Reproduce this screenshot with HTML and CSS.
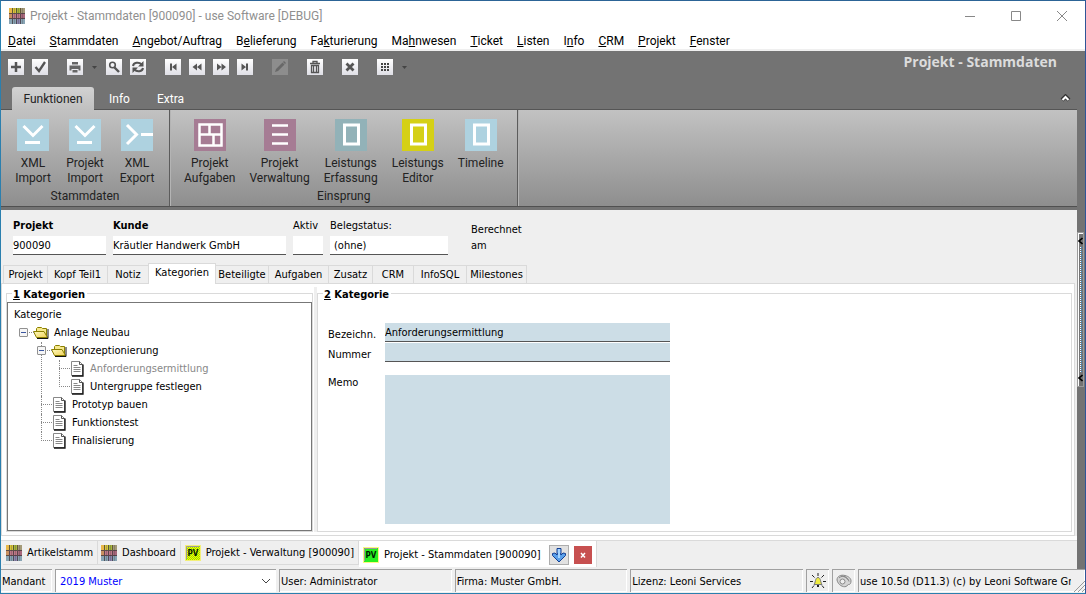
FILE: index.html
```html
<!DOCTYPE html>
<html lang="de">
<head>
<meta charset="utf-8">
<title>Projekt - Stammdaten [900090] - use Software [DEBUG]</title>
<link rel="stylesheet" href="styles.css">
</head>
<body>
<svg class="defs" aria-hidden="true">
  <defs>
    <linearGradient id="fold" x1="0" y1="0" x2="1" y2="1"><stop offset="0" stop-color="#fffbc0"/><stop offset="1" stop-color="#efcf55"/></linearGradient>
    <pattern id="chk" width="2" height="2" patternUnits="userSpaceOnUse"><rect width="2" height="2" fill="#90e800"/><rect width="1" height="1" fill="#fff200"/><rect x="1" y="1" width="1" height="1" fill="#fff200"/></pattern>
    <symbol id="logo" viewBox="0 0 16 16">
      <rect width="16" height="5.500" fill="#d8c63a"/><rect width="3" height="5.500" fill="#e8b848"/><rect x="7" width="4" height="5.500" fill="#a8b83c"/><rect x="12" width="4" height="5.500" fill="#a49a78"/>
      <rect y="5.500" width="16" height="5.500" fill="#c07888"/><rect y="5.500" width="3" height="5.500" fill="#c89060"/><rect x="12" y="5.500" width="4" height="5.500" fill="#a8687c"/>
      <rect y="11" width="16" height="5" fill="#88a4b4"/><rect x="7" y="11" width="5" height="5" fill="#8c88b0"/>
      <path d="M3.500 0v16M7.500 0v16M11.500 0v16M0 5.500h16M0 10.500h16" stroke="#3c3438" opacity=".75"/>
      <path d="M5.500 0v16M9.500 0v16M13.500 0v16" stroke="#3c3438" opacity=".25"/>
    </symbol>
    <symbol id="folder" viewBox="0 0 16 16">
      <path d="M3.500 6V3.500l1-1h4l1 1h4V12.500h-2" fill="#f6e88c" stroke="#8c8000"/>
      <path d="M.5 6.500H11l3.500 6H3.500z" fill="url(#fold)" stroke="#8c8000"/>
      <path d="M15 4v9.500H4" fill="none" stroke="#111"/>
    </symbol>
    <symbol id="doc" viewBox="0 0 16 16">
      <path d="M2.500 .5h8l3 3v11h-11z" fill="#fff" stroke="#888"/>
      <path d="M14 3.500V15H3" fill="none" stroke="#111" stroke-width="1.300"/>
      <path d="M10.500 .5v3h3.500" fill="none" stroke="#555"/>
      <path d="M4.500 4.500h4M4.500 6.500h7M4.500 8.500h7M4.500 10.500h7" stroke="#888"/>
    </symbol>
    <symbol id="pv" viewBox="0 0 16 16">
      <rect x="1" y="1" width="14" height="14" fill="var(--pv)"/>
      <rect x=".5" y=".5" width="15" height="15" fill="none" stroke="#f6ee00" stroke-dasharray="1 1"/>
      <path d="M1.500 14V1.500H14" fill="none" stroke="#999"/>
      <text x="8" y="11" text-anchor="middle" font-size="8" font-weight="bold" fill="#001800">PV</text>
    </symbol>
    <symbol id="down" viewBox="0 0 32 32">
      <path d="M6.500 7L16 16.500L25.500 7M8 23.500H23" fill="none" stroke="#fff" stroke-width="3"/>
    </symbol>
    <symbol id="frame" viewBox="0 0 32 32"><rect x="9.500" y="6" width="14" height="19" fill="none" stroke="#fff" stroke-width="3"/></symbol>
  </defs>
</svg>
<div class="window">
  <header class="titlebar">
    <svg class="i16"><use href="#logo"/></svg>
    <span class="caption">Projekt - Stammdaten [900090] - use Software [DEBUG]</span>
    <button class="winbtn" aria-label="Minimieren"><svg width="12" height="12"><path d="M1 6.500h10" stroke="#888"/></svg></button>
    <button class="winbtn" aria-label="Maximieren"><svg width="12" height="12"><path d="M1.500 1.500h9v9h-9z" fill="none" stroke="#888"/></svg></button>
    <button class="winbtn" aria-label="Schließen"><svg width="12" height="12"><path d="M1 1l10 10M11 1L1 11" stroke="#888"/></svg></button>
  </header>
  <nav class="menubar">
    <button><u>D</u>atei</button><button><u>S</u>tammdaten</button><button><u>A</u>ngebot/Auftrag</button><button>B<u>e</u>lieferung</button><button>Fa<u>k</u>turierung</button><button>Ma<u>h</u>nwesen</button><button><u>T</u>icket</button><button><u>L</u>isten</button><button>I<u>n</u>fo</button><button><u>C</u>RM</button><button><u>P</u>rojekt</button><button><u>F</u>enster</button>
  </nav>
  <div class="body">
    <div class="main">
      <section class="top">
        <div class="toolbar">
          <div class="tools">
            <div class="tgroup">
              <button class="tool" aria-label="Neu"><svg class="i16"><path d="M8 3v10M3 8h10" stroke="#555" stroke-width="2.500"/></svg></button>
              <button class="tool" aria-label="Speichern"><svg class="i16"><path d="M3.500 8l3.500 4 6-9" fill="none" stroke="#555" stroke-width="2.300"/></svg></button>
            </div>
            <div class="tgroup">
              <button class="tool" aria-label="Drucken"><svg class="i16"><path d="M5 3h6v2.500H5zM2.500 6.500h11v5h-2v-1.500h-7v1.500h-2zM5.500 11h5v2.500h-5z" fill="#666"/></svg></button>
              <button class="drop" aria-label="Druckoptionen"><svg width="7" height="5"><path d="M1 1h5L3.500 4z" fill="#444"/></svg></button>
              <button class="tool" aria-label="Suchen"><svg class="i16"><circle cx="6.500" cy="6" r="2.800" fill="none" stroke="#555" stroke-width="1.600"/><path d="M8.500 8.500l4.500 4.500" stroke="#555" stroke-width="2.400"/></svg></button>
              <button class="tool" aria-label="Aktualisieren"><svg class="i16"><path d="M3 7c.5-3.500 6-4.500 8.500-1.500M13 9c-.5 3.500-6 4.500-8.500 1.500" fill="none" stroke="#555" stroke-width="2"/><path d="M13.500 2v5.500H8zM2.500 14V8.500H8z" fill="#555"/></svg></button>
            </div>
            <div class="tgroup">
              <button class="tool" aria-label="Erster"><svg class="i16"><path d="M5 4.500h2v7H5zM11.500 4.500v7L7 8z" fill="#555"/></svg></button>
              <button class="tool" aria-label="Zurück"><svg class="i16"><path d="M8 4.500v7L3.500 8zM12.500 4.500v7L8 8z" fill="#555"/></svg></button>
              <button class="tool" aria-label="Vor"><svg class="i16"><path d="M4 4.500v7L8.500 8zM8.500 4.500v7L13 8z" fill="#555"/></svg></button>
              <button class="tool" aria-label="Letzter"><svg class="i16"><path d="M9 4.500h2v7H9zM4.500 4.500v7L9 8z" fill="#555"/></svg></button>
            </div>
            <button class="tool off" aria-label="Bearbeiten" disabled><svg class="i16"><path d="M3 13l1-3 6.500-6.500 2 2L6 12zM11 3l1-1 2 2-1 1z" fill="#686868"/></svg></button>
            <button class="tool" aria-label="Löschen"><svg class="i16"><path d="M4.500 6.500h7v7h-7zM3 4.500h10M6 4V2.500h4V4M6.500 7v6M9.500 7v6" fill="none" stroke="#555" stroke-width="1.300"/></svg></button>
            <button class="tool" aria-label="Abbrechen"><svg class="i16"><path d="M4.500 4.500l7 7M11.500 4.500l-7 7" stroke="#555" stroke-width="2.800"/></svg></button>
            <div class="tgroup">
              <button class="tool" aria-label="Ansicht"><svg class="i16"><path d="M4 5h8M4 8h8M4 11h8" stroke="#444" stroke-width="2" stroke-dasharray="2 1"/></svg></button>
              <button class="drop" aria-label="Ansichtsoptionen"><svg width="7" height="5"><path d="M1 1h5L3.500 4z" fill="#444"/></svg></button>
            </div>
          </div>
          <h1>Projekt - Stammdaten</h1>
        </div>
        <div class="rtabs">
          <button class="rtab on">Funktionen</button><button class="rtab">Info</button><button class="rtab">Extra</button>
          <button class="collapse" aria-label="Menüband reduzieren"><svg width="11" height="8"><path d="M2 6l3.500-3.500L9 6" fill="none" stroke="#333" stroke-width="4"/><path d="M2.500 6l3-3 3 3" fill="none" stroke="#fff" stroke-width="2"/></svg></button>
        </div>
        <div class="ribbon">
          <div class="rgroup">
            <div class="ritems">
              <button><svg class="i32 blue"><use href="#down"/></svg>XML<br>Import</button>
              <button><svg class="i32 blue"><use href="#down"/></svg>Projekt<br>Import</button>
              <button><svg class="i32 blue"><path d="M6 6l9.500 9.500L6 25M20 15.500h12" fill="none" stroke="#fff" stroke-width="3"/></svg>XML<br>Export</button>
            </div>
            <span>Stammdaten</span>
          </div>
          <div class="rgroup">
            <div class="ritems">
              <button><svg class="i32 mauve"><path d="M5.500 5.500h22v21h-22zM5.500 15.500h22M15.500 5.500v10M19.500 15.500v11" fill="none" stroke="#fff" stroke-width="2.500"/></svg>Projekt<br>Aufgaben</button>
              <button><svg class="i32 mauve"><path d="M8 6.500h16M8 15.500h16M8 24.500h16" stroke="#fff" stroke-width="2.500"/></svg>Projekt<br>Verwaltung</button>
              <button><svg class="i32 teal"><use href="#frame"/></svg>Leistungs<br>Erfassung</button>
              <button><svg class="i32 yellow"><use href="#frame"/></svg>Leistungs<br>Editor</button>
              <button><svg class="i32 blue"><use href="#frame"/></svg>Timeline</button>
            </div>
            <span>Einsprung</span>
          </div>
        </div>
      </section>
      <form class="head">
        <div class="fld f-nr"><label class="b" for="nr">Projekt</label><input id="nr" value="900090"></div>
        <div class="fld f-kd"><label class="b" for="kd">Kunde</label><input id="kd" value="Kräutler Handwerk GmbH"></div>
        <div class="fld f-ak"><label for="ak">Aktiv</label><input id="ak"></div>
        <div class="fld f-st"><label for="st">Belegstatus:</label><input id="st" value="(ohne)"></div>
        <p>Berechnet<br>am</p>
      </form>
      <div class="tabs">
        <button class="w-s">Projekt</button><button class="w-l">Kopf Teil1</button><button class="w-xs">Notiz</button><button class="w-xl on">Kategorien</button><button class="w-m">Beteiligte</button><button class="w-l">Aufgaben</button><button class="w-s">Zusatz</button><button class="w-xs">CRM</button><button class="w-m">InfoSQL</button><button class="w-l">Milestones</button>
      </div>
      <div class="page">
        <section class="box left">
          <h2><u>1</u> Kategorien</h2>
          <div class="treebox">
            <div class="th">Kategorie</div>
            <ul class="tree">
              <li><div class="row"><button class="tog" aria-label="Zuklappen"></button><svg class="i16"><use href="#folder"/></svg>Anlage Neubau</div>
                <ul>
                  <li><div class="row"><button class="tog" aria-label="Zuklappen"></button><svg class="i16"><use href="#folder"/></svg>Konzeptionierung</div>
                    <ul>
                      <li><div class="row sel"><svg class="i16"><use href="#doc"/></svg>Anforderungsermittlung</div></li>
                      <li><div class="row"><svg class="i16"><use href="#doc"/></svg>Untergruppe festlegen</div></li>
                    </ul>
                  </li>
                  <li><div class="row"><svg class="i16"><use href="#doc"/></svg>Prototyp bauen</div></li>
                  <li><div class="row"><svg class="i16"><use href="#doc"/></svg>Funktionstest</div></li>
                  <li><div class="row"><svg class="i16"><use href="#doc"/></svg>Finalisierung</div></li>
                </ul>
              </li>
            </ul>
          </div>
        </section>
        <div class="split"></div>
        <section class="box right">
          <h2><u>2</u> Kategorie</h2>
          <div class="detail">
            <label for="bz">Bezeichn.</label><input id="bz" value="Anforderungsermittlung">
            <label for="nm">Nummer</label><input id="nm">
            <label for="me">Memo</label><textarea id="me"></textarea>
          </div>
        </section>
      </div>
      <div class="docs">
        <button class="doc"><svg class="i16"><use href="#logo"/></svg>Artikelstamm</button>
        <button class="doc"><svg class="i16"><use href="#logo"/></svg>Dashboard</button>
        <button class="doc pvy"><svg class="i16"><use href="#pv"/></svg>Projekt - Verwaltung [900090]</button>
        <div class="doc on">
          <svg class="i16"><use href="#pv"/></svg><span>Projekt - Stammdaten [900090]</span>
          <button class="pin" aria-label="Andocken"><svg width="16" height="16"><path d="M6 1.500h4V7h-4z" fill="#8cc4f8" stroke="#123f94"/><path d="M1.500 6.500l2.500-.5 2 2V7h4v1l2-2 2.500.5v2L8 15 1.500 8.500z" fill="#5aa0ea" stroke="#123f94"/><path d="M8 2v9" stroke="#a4d4ff" stroke-width="2"/></svg></button>
          <button class="close" aria-label="Schließen"><svg width="8" height="8"><path d="M2 2l4 4.500M6 2L2 6.500" stroke="#fff" stroke-width="1.500"/></svg></button>
        </div>
      </div>
    </div>
    <aside class="side"><button class="grip" aria-label="Seitenleiste"><svg width="5" height="8"><path d="M4.500 1L1 4l3.500 3" fill="none" stroke="#000" stroke-width="1.600"/></svg><i></i><svg width="5" height="8"><path d="M4.500 1L1 4l3.500 3" fill="none" stroke="#000" stroke-width="1.600"/></svg></button></aside>
  </div>
  <footer class="status">
    <label class="cell mand" for="mandant">Mandant</label>
    <div class="cell pick"><select id="mandant"><option>2019 Muster</option></select><svg class="arr" width="10" height="6"><path d="M1 1l4 4 4-4" fill="none" stroke="#444"/></svg></div>
    <span class="cell wide">User: Administrator</span>
    <span class="cell wide">Firma: Muster GmbH.</span>
    <span class="cell wide">Lizenz: Leoni Services</span>
    <span class="cell ic"><svg class="i16"><path d="M2 2l2.500 2.500M14 2l-2.500 2.500M0 8.500h3M13 8.500h3M2 15l2-2.500M14 15l-2-2.500M8 0v3" stroke="#222"/><path d="M4 11.500c1.500-1 1-7 4-7s2.500 6 4 7z" fill="#f0ec40" stroke="#777"/><path d="M7 13h2" stroke="#222" stroke-width="2"/></svg></span>
    <span class="cell ic"><svg class="i16"><path d="M1 7c0-4 4-5.500 8-4.500s6 3 6 5.500c0 2-1 4-2.500 3.500L10 13.500C7 14.500 2 12 1 7z" fill="#d4d4d4" stroke="#888"/><circle cx="6.500" cy="8.500" r="2.500" fill="#eee" stroke="#888"/><path d="M3 5c3-3 7-1.500 9.500 2.500M5 3.500c4-1 7 1.500 8 5" fill="none" stroke="#888"/></svg></span>
    <span class="cell ver"><span>use 10.5d (D11.3) (c) by Leoni Software Gr</span><svg width="12" height="12"><path d="M1 12L12 1M5 12l7-7M9 12l3-3" stroke="#999"/></svg></span>
  </footer>
</div>
</body>
</html>
```
FILE: styles.css
```css
* { box-sizing: border-box; }
body { margin: 0; background: #efefef; color: #000; font: 11px/14px "DejaVu Sans Condensed", "Noto Sans", sans-serif; }
button, input, textarea, select { font: inherit; color: inherit; margin: 0; padding: 0; border: 0; background: none; border-radius: 0; }
h1, h2, p, ul { margin: 0; padding: 0; }
svg { display: block; flex: none; }
.defs { position: absolute; width: 0; height: 0; }
.i16 { width: 16px; height: 16px; }
.i32 { width: 32px; height: 32px; }
.window { display: flex; flex-direction: column; min-height: 100vh; border: 1px solid #2b7fae; border-top-color: #2c6496; border-right-color: #2f5597; overflow: hidden; }
.titlebar, .menubar, .toolbar, .rtabs, .ribbon { font-family: Roboto, "Noto Sans", sans-serif; font-size: 12px; line-height: 15px; }
.titlebar { display: flex; align-items: center; height: 29px; padding-left: 8px; background: #fff; color: #8f8f8f; }
.caption { flex: 1; padding: 2px 0 0 5px; }
.winbtn { width: 46px; height: 28px; display: flex; align-items: center; justify-content: center; }
.menubar { display: flex; gap: 14px; height: 21px; padding: 4px 7px 0; background: #fff; border-bottom: 2px solid #efefef; align-items: flex-start; }
.body { flex: 1; display: flex; }
.main { flex: 1; min-width: 0; display: flex; flex-direction: column; }
.side { width: 8px; background: #737373; padding-top: 181px; }
.grip { width: 7px; height: 155px; padding: 4px 0; display: flex; flex-direction: column; align-items: center; gap: 2px; border: 1px solid #9b9b9b; box-shadow: inset 1px 1px #fff; }
.grip i { flex: 1; width: 2px; border-left: 1px dotted #fff; border-right: 1px dotted #3c8fd0; }
.top { background: #737373; border-bottom: 3px solid #737373; }
.toolbar { display: flex; justify-content: space-between; height: 36px; padding: 0 20px 0 7px; }
.tools { display: flex; gap: 19px; padding-top: 8px; }
.tgroup { display: flex; gap: 8px; }
.tool { width: 16px; height: 16px; background: linear-gradient(#fff, #dfdfe6); }
.tool.off { background: #8d8d8d; }
.drop { width: 7px; height: 16px; display: flex; align-items: center; }
h1 { padding-top: 2px; font: bold 14px/18px "Open Sans", "Noto Sans", sans-serif; color: #dcdcdc; }
.rtabs { display: flex; height: 23px; padding: 0 6px 0 11px; border-bottom: 1px solid #555; }
.rtab { min-width: 51px; padding: 2px 11px 0; color: #fff; }
.rtab.on { min-width: 82px; margin-bottom: -1px; padding: 1px 10px 0; color: #222; background: linear-gradient(#d2d2d2, #c0c0c0); border-radius: 3px 3px 0 0; }
.collapse { margin-left: auto; }
.ribbon { display: flex; height: 97px; color: #222; background: linear-gradient(#c2c2c2, #8e8e8e); border-bottom: 1px solid #505050; }
.rgroup { display: flex; flex-direction: column; justify-content: space-between; align-items: center; padding: 9px 6px 2px; border-right: 1px solid #5c5c5c; box-shadow: 1px 0 #b4b4b4; }
.rgroup + .rgroup { padding-left: 7px; }
.ritems { display: flex; align-items: flex-start; }
.ritems button { display: flow-root; min-width: 52px; padding: 0 7px; text-align: center; }
.i32 { margin: 0 auto 5px; }
.blue { background: #aed2e0; }
.mauve { background: #a67c94; }
.teal { background: #92b2b8; }
.yellow { background: #d5d016; }
.head { display: flex; gap: 7px; padding: 9px 12px 8px; }
.fld { display: flex; flex-direction: column; gap: 3px; }
.fld input { width: 100%; height: 19px; background: #fff; border-bottom: 1px solid #555; }
.f-nr { width: 93px; }
.f-kd { width: 173px; }
.f-ak { width: 30px; }
.f-st { width: 118px; }
.f-st input { padding-left: 4px; }
.b, h2 { font-weight: bold; }
.head p { padding: 3px 0 0 16px; line-height: 16px; }
.tabs { display: flex; align-items: flex-end; padding-left: 2px; height: 20px; }
.tabs button { height: 18px; border: 1px solid #dadada; border-bottom: 0; margin-right: -1px; white-space: nowrap; }
.tabs .on { height: 21px; margin-bottom: -1px; background: #fff; position: relative; padding-bottom: 2px; }
.w-xs { width: 42px; }
.w-s { width: 45px; }
.w-m { width: 54px; }
.w-l { width: 61px; }
.w-xl { width: 68px; }
.page { flex: 1; display: flex; padding: 3px 2px 3px 4px; background: #fff; border: 1px solid #dadada; margin-right: 2px; }
.box { position: relative; display: flex; flex-direction: column; border: 1px solid #dadada; margin-top: 6px; }
h2 { position: absolute; top: -6px; left: 5px; padding: 0 2px 0 1px; background: #fff; font-size: 11px; line-height: 14px; }
.left { width: 307px; padding-top: 8px; }
.split { width: 3px; margin-left: 1px; background: #efefef; }
.right { flex: 1; }
.treebox { flex: 1; border: 1px solid #777; padding: 3px 6px; }
.th { height: 18px; line-height: 18px; }
.tree, .tree ul { list-style: none; }
.tree { padding-left: 5px; }
.tree ul { padding-left: 18px; }
.tree li { position: relative; }
.row { display: flex; align-items: center; height: 18px; padding-left: 14px; }
.row .i16 { margin-right: 5px; }
.row .tog { position: absolute; z-index: 1; left: 0; top: 4px; width: 9px; height: 9px; border: 1px solid #919191; border-radius: 1px; background: linear-gradient(#3b57a0, #3b57a0) center / 5px 1px no-repeat, #f6f6f6; }
.sel { color: #888; }
.tree li::after { content: ""; position: absolute; left: 4px; top: 8px; width: 11px; border-top: 1px dotted #888; }
.tree li li::before { content: ""; position: absolute; left: 4px; top: 0; bottom: 0; border-left: 1px dotted #888; }
.tree li li:last-child::before { bottom: auto; height: 9px; }
.detail { display: grid; grid-template-columns: 57px 285px; padding: 29px 10px 7px; row-gap: 1px; }
.detail label { padding-top: 5px; }
.detail input { height: 19px; background: #ccdde6; border-bottom: 1px solid #555; }
.detail textarea { height: 149px; margin-top: 12px; background: #ccdde6; resize: none; display: block; }
.detail label:nth-of-type(3) { padding-top: 13px; }
.docs { display: flex; align-items: flex-start; height: 33px; padding: 0 0 0 2px; border-top: 4px solid #fff; box-shadow: inset 0 1px #dadada; }
.doc { --pv: #28f020; display: flex; align-items: center; gap: 5px; height: 25px; padding: 1px 4px 0 3px; border: solid #dadada; border-width: 1px 1px 1px 0; white-space: nowrap; }
.doc.pvy { --pv: url(#chk); padding-left: 4px; }
.doc.on { height: 27px; padding: 2px 4px 0; background: #fff; border-bottom: 0; }
.pin { width: 20px; height: 20px; margin-left: 3px; padding: 1px; background: #e1e1e1; border: 1px solid #adadad; }
.close { width: 18px; height: 18px; padding: 5px; background: #c75050; }
.status { display: flex; gap: 3px; height: 24px; padding-bottom: 1px; }
.cell { display: flex; align-items: center; padding: 1px 0 0 1px; border: solid #a0a0a0; border-width: 1px 0 0 1px; box-shadow: inset -1px -1px #fff; white-space: nowrap; overflow: hidden; }
.mand { width: 51px; border-left: 0; padding-left: 1px; }
.pick { position: relative; flex: 222 1 0; background: #fff; }
.pick select { width: 100%; height: 100%; padding-left: 3px; color: #00f; appearance: none; }
.arr { position: absolute; right: 5px; top: 8px; pointer-events: none; }
.wide { flex: 173 1 0; }
.ic { width: 23px; padding: 0 3px; }
.ver { flex: 228 1 0; align-items: flex-end; }
.ver span { flex: 1; min-width: 0; overflow: hidden; align-self: center; }
.ver svg { margin-left: 2px; }
```
